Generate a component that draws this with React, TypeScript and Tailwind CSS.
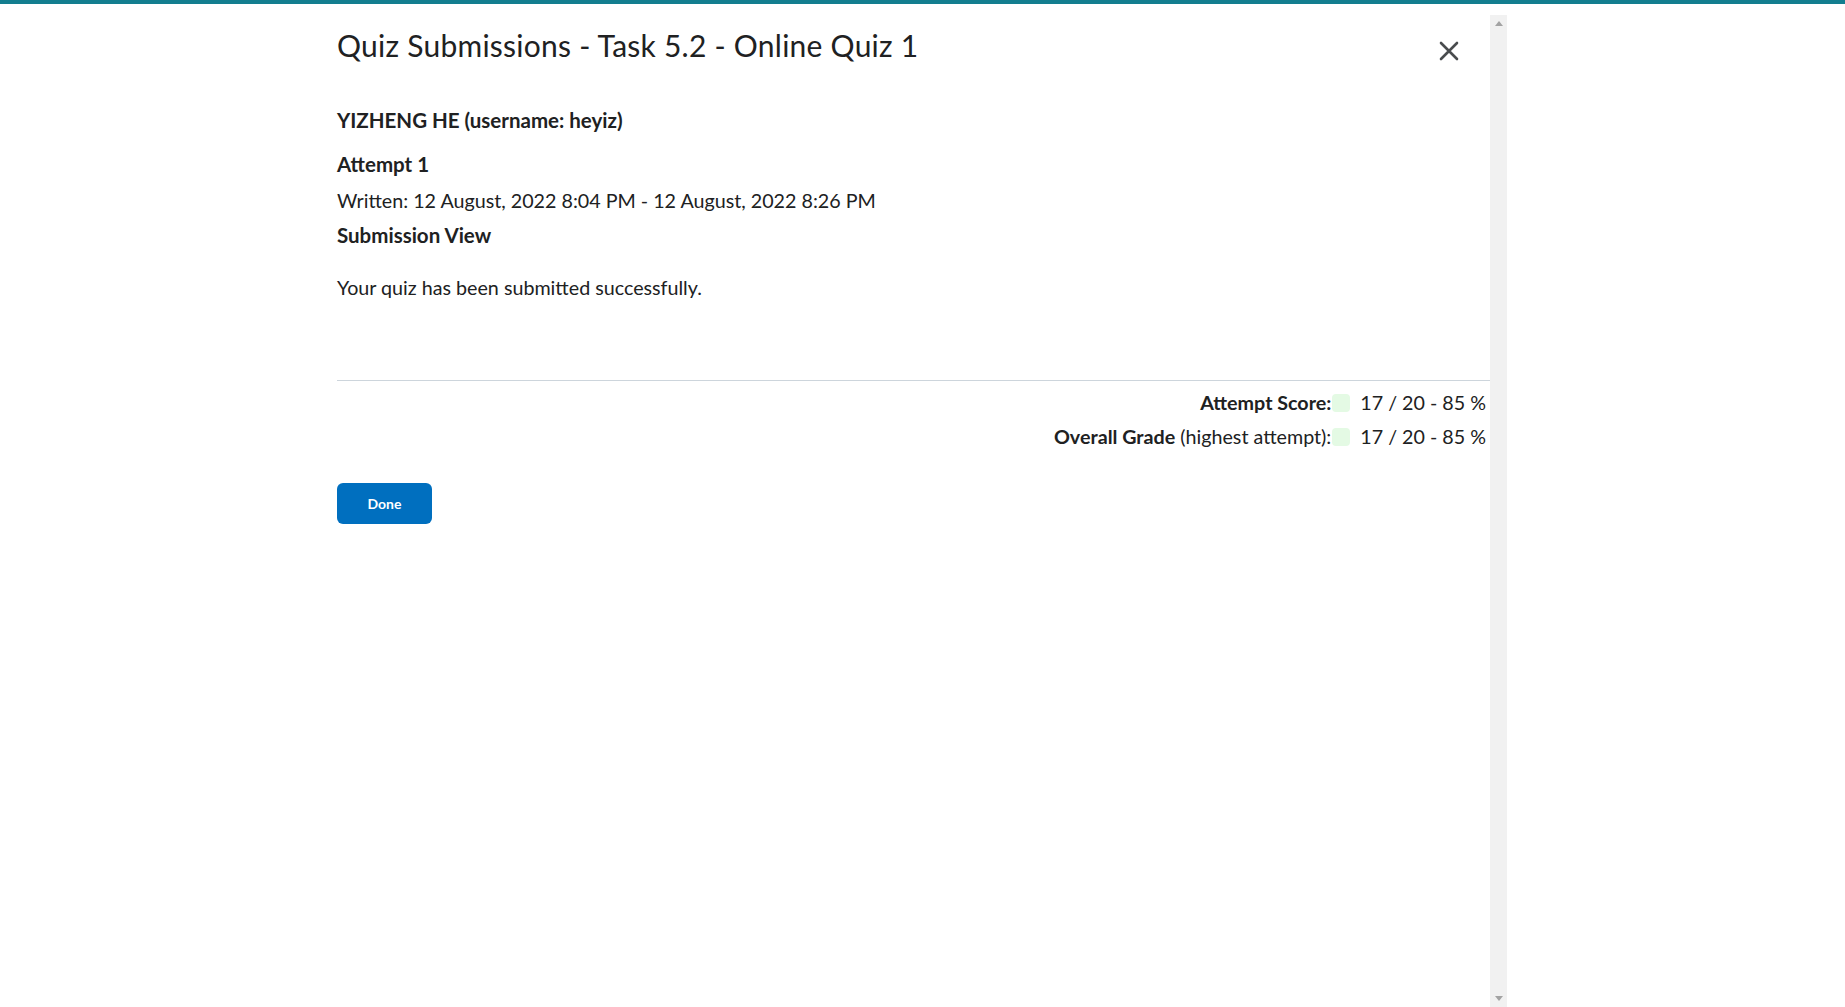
import React from 'react';

const scores = [
  { label: 'Attempt Score:', note: '', value: '17 / 20 - 85 %' },
  { label: 'Overall Grade', note: ' (highest attempt):', value: '17 / 20 - 85 %' },
];

export default function App() {
  return (
    <div className="min-h-screen bg-white text-[#202122]" style={{ fontFamily: 'Lato, "Open Sans", sans-serif' }}>
      {/* Brand bar */}
      <div className="h-1 bg-[#137e8f]" />

      <div className="ml-[320px] mt-[11px] flex h-[992px] w-[1187px]">
        {/* Dialog body */}
        <div className="flex-1 pl-[17px]">
          <div className="mt-[13px] flex items-start justify-between">
            <h1 className="text-[30px] leading-[34px] font-normal tracking-[0.25px]">Quiz Submissions - Task 5.2 - Online Quiz 1</h1>
            <button className="mr-[31px] mt-[13px] text-[#494c4e]" aria-label="Close">
              <svg width="20" height="20" viewBox="0 0 20 20" fill="none" stroke="currentColor" strokeWidth="2.6" strokeLinecap="round">
                <path d="M2 2 L18 18 M18 2 L2 18" />
              </svg>
            </button>
          </div>

          <p className="mt-[44px] text-[20.5px] leading-[28px] font-bold">YIZHENG HE (username: heyiz)</p>
          <p className="mt-[16px] text-[20.5px] leading-[28px] font-bold">Attempt 1</p>
          <p className="mt-[9px] text-[19.7px] leading-[28px]">Written: 12 August, 2022 8:04 PM - 12 August, 2022 8:26 PM</p>
          <p className="mt-[6px] text-[20.5px] leading-[28px] font-bold">Submission View</p>
          <p className="mt-[25px] text-[19.7px] leading-[28px]">Your quiz has been submitted successfully.</p>

          <div className="mt-[78px] border-t border-[#cdd5dc]" />

          <div className="mt-[8px] flex flex-col items-end gap-[6px] pr-[4px]">
            {scores.map((s) => (
              <div key={s.label} className="flex items-center text-[19.7px] leading-[28px]">
                <span>
                  <span className="font-bold">{s.label}</span>
                  {s.note}
                </span>
                <span className="ml-[1px] h-[18px] w-[18px] rounded-[4px] bg-[#e4fae4]" />
                <span className="ml-[10px]">{s.value}</span>
              </div>
            ))}
          </div>

          <button className="mt-[32px] h-[41px] w-[95px] rounded-[6px] bg-[#006fbf] text-[14px] font-bold text-white">
            Done
          </button>
        </div>

        {/* Scrollbar */}
        <div className="flex w-[17px] flex-col items-center justify-between bg-[#f1f1f1] py-[6px]">
          <svg width="8" height="5" viewBox="0 0 8 5">
            <path d="M0 5 L4 0 L8 5 Z" fill="#a3a3a3" />
          </svg>
          <svg width="8" height="5" viewBox="0 0 8 5">
            <path d="M0 0 L8 0 L4 5 Z" fill="#a3a3a3" />
          </svg>
        </div>
      </div>
    </div>
  );
}
